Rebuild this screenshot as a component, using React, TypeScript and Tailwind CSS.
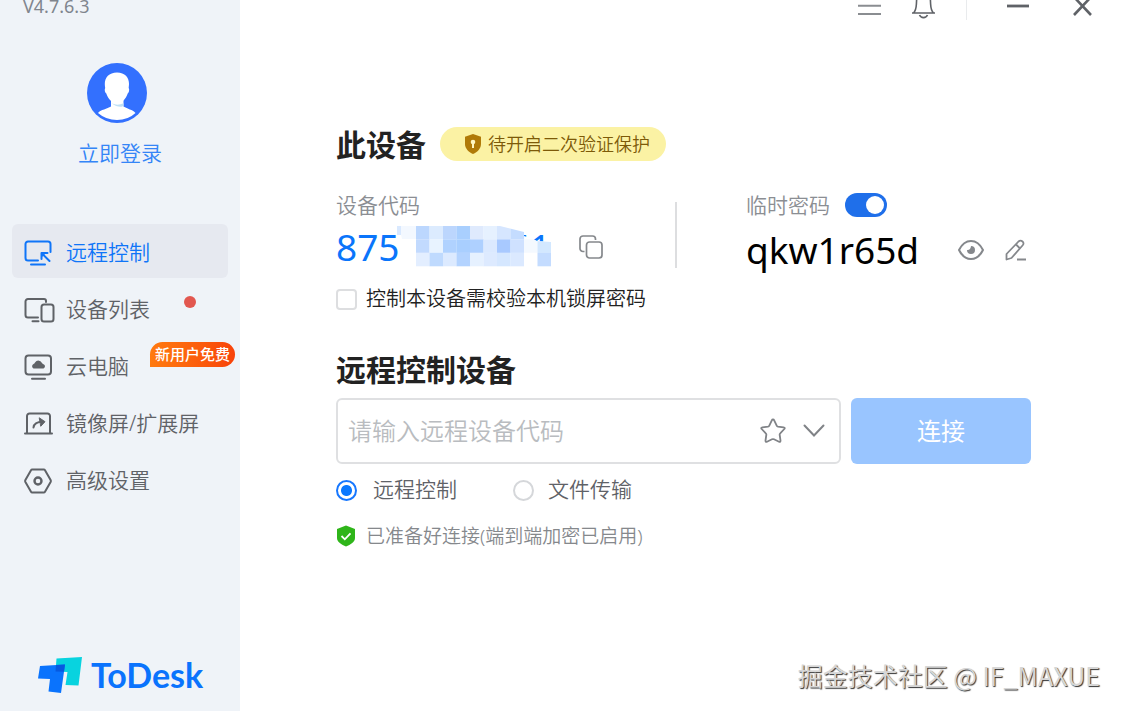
import React, { useState } from 'react';

type IconProps = { className?: string };

const RemoteIcon: React.FC<IconProps> = ({ className }) => (
  <svg className={className} width="28" height="26" viewBox="0 0 28 26" fill="none" stroke="currentColor" strokeWidth="2" strokeLinecap="round">
    <path d="M14 20.500H4a2.500 2.500 0 0 1-2.500-2.500V4A2.500 2.500 0 0 1 4 1.500h20A2.500 2.500 0 0 1 26.500 4v8" />
    <path d="M7 24.500h14" />
    <path d="M25.500 21L18.500 14" />
    <path d="M17.500 19v-6h6" strokeLinejoin="round" />
    <path d="M17 18v-5.500h5.500z" fill="currentColor" stroke="none" />
  </svg>
);

const DevicesIcon: React.FC<IconProps> = ({ className }) => (
  <svg className={className} width="31" height="26" viewBox="0 0 31 26" fill="none" stroke="currentColor" strokeWidth="2" strokeLinecap="round">
    <path d="M14 20.500H4A2.500 2.500 0 0 1 1.500 18V4.500A2.500 2.500 0 0 1 4 2h16a2 2 0 0 1 2 2v1" />
    <path d="M8.500 24.200h6" />
    <rect x="17.500" y="7.500" width="12" height="17" rx="2.500" />
  </svg>
);

const CloudPcIcon: React.FC<IconProps> = ({ className }) => (
  <svg className={className} width="28" height="26" viewBox="0 0 28 26" fill="none" stroke="currentColor" strokeWidth="2" strokeLinecap="round">
    <rect x="1.500" y="1.500" width="25.500" height="19" rx="3" />
    <path d="M8 24.700h13" />
    <path d="M9.500 14.500a2.500 2.500 0 0 1 0-4.500q1-.2 1.500-1.500 1.300-2 3.300-2 2.500 0 3.700 2.500.5 1 1.500 1.200a2.300 2.300 0 0 1 0 4.300z" fill="currentColor" stroke="none" />
  </svg>
);

const MirrorIcon: React.FC<IconProps> = ({ className }) => (
  <svg className={className} width="29" height="24" viewBox="0 0 29 24" fill="none" stroke="currentColor" strokeWidth="2" strokeLinecap="round">
    <path d="M3 21V4a2.500 2.500 0 0 1 2.500-2.500h18A2.500 2.500 0 0 1 26 4v17" />
    <path d="M1 21.500h27" />
    <path d="M9.500 15.500c.5-4 4-5.800 9-5.800" />
    <path d="M15.500 6l5.500 3.700-4 4.300z" fill="currentColor" strokeWidth="1" strokeLinejoin="round" />
  </svg>
);

const SettingsIcon: React.FC<IconProps> = ({ className }) => (
  <svg className={className} width="28" height="26" viewBox="0 0 28 26" fill="none" stroke="currentColor" strokeWidth="2" strokeLinejoin="round">
    <path d="M8.200 1.500h11.600q.8 0 1.200.7l5.600 9.800q.5 1 0 2L21 23.800q-.4.700-1.200.7H8.200q-.8 0-1.200-.7L1.400 14q-.5-1 0-2L7 2.200q.4-.7 1.200-.7z" />
    <circle cx="14" cy="13" r="3.500" strokeWidth="2.400" />
  </svg>
);

const Avatar: React.FC = () => (
  <svg width="60" height="60" viewBox="0 0 60 60" aria-hidden="true">
    <circle cx="30" cy="30" r="30" fill="#3370fe" />
    <path d="M24 36h12.500v7.500c4 2.500 9 3 12 6.500Q41 57 30 57t-19-7c3-3.500 9-4 13-6.500z" fill="#fff" />
    <path d="M24.500 40c4 2.300 8 2 12 .3v2c-1 2.500-7 2-12-2.300z" fill="#bfe0f5" />
    <path d="M30 9.500c8 0 12 5 12 11.500 0 1.500-.3 3-.3 4 1 1.500.3 4.500-1 5.500C39 36 34 41 30 41s-9-5-10.700-10.500c-1.500-1-2-4-1.100-5.500-.2-1-.4-2.500-.4-4C17.800 14.500 22 9.500 30 9.500z" fill="#fff" />
  </svg>
);

// pixelated patch over the middle of the device code, one entry per cell
const MOSAIC = [
  ['#bcd7fe', '#dcebfe', '#bcd6fd', '#a9cffe', '#dfeafd', '#e6f1ff', '#d6e6ff', '#c4dcff'],
  ['#c2dafe', '#e8f3ff', '#b0d2ff', '#a9cfff', '#aed0ff', '#dbe9ff', '#a8c9ff', '#cfe1ff', '#f4f9ff', '#d3e8ff'],
  ['#e3eeff', '#bfdafe', '#dceaff', '#b3d3ff', '#e6f1ff', '#ddeaff', '#d5e7ff', '#dbe9ff', '#ffffff', '#c4dcff'],
];

const Mosaic: React.FC = () => (
  <svg className="absolute left-[60px] top-0" width="160" height="60" viewBox="0 0 160 60" aria-hidden="true">
    <defs>
      <clipPath id="patch">
        <path d="M0 0h100l4 7 24 6v4l6 2 7 3 14 1v25H9V20H0z" />
      </clipPath>
    </defs>
    <g clipPath="url(#patch)">
      <path d="M9 7h147v42H9z" fill="#fff" />
      <path d="M3 7h17v13H6z" fill="#f3f8ff" />
      <rect x="1" y="7" width="4" height="9" fill="#d9e9ff" />
      {MOSAIC.map((row, r) =>
        row.map((color, c) => (
          <rect key={`${r}-${c}`} x={20 + c * 13.5} y={7 + r * 13.4} width="13.6" height="13.5" fill={color} />
        ))
      )}
    </g>
  </svg>
);

const NAV = [
  { label: '远程控制', icon: RemoteIcon },
  { label: '设备列表', icon: DevicesIcon, dot: true },
  { label: '云电脑', icon: CloudPcIcon, tag: '新用户免费' },
  { label: '镜像屏/扩展屏', icon: MirrorIcon },
  { label: '高级设置', icon: SettingsIcon },
];

const Sidebar: React.FC = () => {
  const [active, setActive] = useState(0);

  return (
    <aside className="flex w-60 shrink-0 flex-col bg-[#eff3f8]">
      <div className="-mt-1.5 pl-[23px] text-lg leading-6 font-normal text-[#80858e]">V4.7.6.3</div>

      <div className="mt-[45px] flex flex-col items-center">
        <div className="pr-1.5">
          <Avatar />
        </div>
        <a href="#login" className="mt-4 text-[21px] leading-7 text-[#3485f7]">
          立即登录
        </a>
      </div>

      <nav className="mt-[57px] flex flex-col gap-[3px] px-3">
        {NAV.map((item, idx) => {
          const Icon = item.icon;
          return (
            <button
              key={item.label}
              type="button"
              onClick={() => setActive(idx)}
              className={`relative flex h-[54px] items-center rounded-md pt-[3px] pl-3 text-left text-[21px] ${idx === active ? 'bg-[#e6e9f0] text-[#0f75f8]' : 'text-[#5f6267]'}`}
            >
              <span className="w-[42px] shrink-0">
                <Icon />
              </span>
              {item.label}
              {item.dot && <span className="absolute right-8 top-[15px] size-3 rounded-full bg-[#e2574f]" />}
              {item.tag && (
                <span className="absolute -right-[7px] top-1 rounded-t-full rounded-br-full rounded-bl-sm bg-linear-to-r from-[#ff7a0f] to-[#f8420a] px-[5px] text-[15px] leading-[25px] font-medium text-white">
                  {item.tag}
                </span>
              )}
            </button>
          );
        })}
      </nav>

      <div className="mt-auto flex items-center gap-2 pb-4 pl-[38px]">
        <svg width="45" height="36" viewBox="0 0 45 36" aria-hidden="true">
          <path d="M18.500 1.500L44 0l-3.500 28.500L27.500 28l2-13-12-.5z" fill="#08d3df" />
          <path d="M2 9l25-1.500L23 36l-12.500-1.500L12 22 0 21.500z" fill="#0a73fd" />
          <path d="M18 8.100L27 7.500l-1 7.300-8.500-.3z" fill="#0659e0" />
        </svg>
        <span className="font-[Lato] text-[34px] leading-10 font-bold text-[#0a73fd]">ToDesk</span>
      </div>
    </aside>
  );
};

const WindowBar: React.FC = () => (
  <header className="flex h-5 items-start justify-end overflow-hidden pr-[30px] text-[#5f6267]">
    <button type="button" aria-label="菜单" className="mr-[30px]">
      <svg width="23" height="20" viewBox="0 0 23 20" stroke="#8a8d91" strokeWidth="2">
        <path d="M0 5.700h23M0 14h23" />
      </svg>
    </button>
    <button type="button" aria-label="通知" className="mr-[30px]">
      <svg width="25" height="20" viewBox="0 0 25 20" fill="none" stroke="currentColor" strokeWidth="1.600">
        <path d="M1 13h23M2.500 13c2-2 2.700-5 2.900-9l.3-6M22.500 13c-2-2-2.700-5-2.900-9l-.3-6" />
        <path d="M8.500 15c1.500 3.500 6.500 3.500 8 0" />
      </svg>
    </button>
    <span className="h-5 w-px bg-[#e9ebed]" />
    <button type="button" aria-label="最小化" className="ml-10">
      <svg width="22" height="20" viewBox="0 0 22 20" stroke="currentColor" strokeWidth="2.800">
        <path d="M0 6h22" />
      </svg>
    </button>
    <button type="button" aria-label="关闭" className="ml-11">
      <svg width="19" height="20" viewBox="0 0 19 20" stroke="currentColor" strokeWidth="2.600">
        <path d="M1-3l17 18M18-3L1 15" />
      </svg>
    </button>
  </header>
);

const App: React.FC = () => {
  const [tempPassword, setTempPassword] = useState(true);
  const [verifyLock, setVerifyLock] = useState(false);
  const [target, setTarget] = useState('');
  const [mode, setMode] = useState('control');

  const radioClass =
    "size-[21px] appearance-none rounded-full border-2 border-[#d5d7da] checked:border-[#1677ff] checked:bg-[radial-gradient(circle,#0a78ff_0_5px,#fff_6px)]";

  return (
    <div className="relative flex min-h-screen bg-white font-['Noto_Sans','Noto_Sans_CJK_SC',sans-serif] font-[350] text-[#222]">
      <Sidebar />

      <main className="min-w-0 flex-1">
        <WindowBar />

        <div className="pt-[106px] pr-[91px] pl-24">
          {/* This device */}
          <section>
            <div className="flex h-9 items-center gap-3.5">
              <h2 className="text-[30px] font-bold">此设备</h2>
              <button type="button" className="flex h-[34px] items-center gap-1.5 rounded-full bg-[#fbf2a4] pr-4 pl-6 text-lg text-[#7d5a08]">
                <svg width="18" height="20" viewBox="0 0 18 20" aria-hidden="true">
                  <path d="M9 0l8 2.800V10c0 4.500-3.500 8-8 10-4.500-2-8-5.500-8-10V2.800z" fill="#b07a08" />
                  <circle cx="9" cy="8" r="2.300" fill="#fff6c0" />
                  <path d="M8 9h2v5H8z" fill="#fff6c0" />
                </svg>
                待开启二次验证保护
              </button>
            </div>

            <div className="mt-[29px] flex items-start">
              <div className="flex-1">
                <div className="h-7 text-[21px] leading-7 text-[#8b8e93]">设备代码</div>
                <div className="flex h-14 items-center gap-7">
                  <div className="relative flex w-[215px] justify-between text-[37px] leading-[56px] font-normal text-[#0a75fb]">
                    <span>875</span>
                    <span>51</span>
                    <Mosaic />
                  </div>
                  <button type="button" aria-label="复制">
                    <svg width="24" height="24" viewBox="0 0 24 24" fill="none" stroke="#85888c" strokeWidth="1.700">
                      <path d="M5.500 16.500H4A3 3 0 0 1 1 13.500V4a3 3 0 0 1 3-3h9.500a3 3 0 0 1 3 3v1" />
                      <rect x="7.500" y="7" width="15.500" height="16" rx="3" />
                    </svg>
                  </button>
                </div>
              </div>
              <div className="mt-[11px] h-[66px] w-0.5 bg-[#dddee0]" />
              <div className="w-[354px] pl-[69px]">
                <label className="flex h-7 items-center gap-[15px] text-[21px] leading-7 text-[#8b8e93]">
                  临时密码
                  <input
                    type="checkbox"
                    role="switch"
                    checked={tempPassword}
                    onChange={(e) => setTempPassword(e.target.checked)}
                    className="h-6 w-[42px] appearance-none rounded-full bg-[#c5c8cc] p-[3px] before:block before:size-[18px] before:rounded-full before:bg-white checked:bg-[#1f6fea] checked:before:ml-[18px]"
                  />
                </label>
                <div className="flex h-[62px] items-center text-black">
                  <span className="flex-1 text-[37px] font-normal">qkw1r65d</span>
                  <button type="button" aria-label="显示密码">
                    <svg width="26" height="22" viewBox="0 0 26 22" fill="none" stroke="#85888c" strokeWidth="2">
                      <path d="M1 11c3-6 7-9 12-9s9 3 12 9c-3 6-7 9-12 9s-9-3-12-9z" strokeLinejoin="round" />
                      <path d="M13 7a4 4 0 1 1-4 4q3.500.5 4-4z" fill="#85888c" stroke="none" />
                    </svg>
                  </button>
                  <button type="button" aria-label="修改密码" className="mr-1 ml-[21px]">
                    <svg width="22" height="22" viewBox="0 0 22 22" fill="none" stroke="#85888c" strokeWidth="1.800" strokeLinejoin="round">
                      <path d="M1.500 20.500V15L13.500 2.500q2-1.800 4 0t0 4L6.500 19z" />
                      <path d="M11 5.500l4 4M12 20.500h9" />
                    </svg>
                  </button>
                </div>
              </div>
            </div>

            <label className="mt-[3px] flex h-[30px] items-center gap-[9px] text-xl">
              <input
                type="checkbox"
                checked={verifyLock}
                onChange={(e) => setVerifyLock(e.target.checked)}
                className="size-[21px] appearance-none rounded-sm border-2 border-[#dddee0] checked:bg-[#0a78ff]"
              />
              控制本设备需校验本机锁屏密码
            </label>
          </section>

          {/* Remote device */}
          <section className="mt-9">
            <h2 className="text-[30px] leading-10 font-bold">远程控制设备</h2>
            <div className="mt-2 flex gap-[10px]">
              <div className="flex h-[66px] min-w-0 flex-1 items-center rounded-md border-2 border-[#dfe0e2] pr-3.5 pl-[10px]">
                <input
                  type="text"
                  value={target}
                  onChange={(e) => setTarget(e.target.value)}
                  placeholder="请输入远程设备代码"
                  aria-label="远程设备代码"
                  className="min-w-0 flex-1 text-2xl outline-none placeholder:text-[#b9bcc0]"
                />
                <button type="button" aria-label="收藏">
                  <svg width="26" height="26" viewBox="0 0 26 26" fill="none" stroke="#808387" strokeWidth="1.800" strokeLinejoin="round">
                    <path d="M13 1.500q.8 0 1.200.9l2.500 5.300q.4.800 1.300 1l5.600.6q1.800.4.700 1.700l-4.100 4.300q-.7.700-.5 1.700l.8 5.600q.1 1.800-1.500 1.100L14 21.300q-1-.5-2 0l-5 2.400q-1.600.7-1.500-1.100l.8-5.600q.2-1-.5-1.700L1.700 11q-1.100-1.300.7-1.700L8 8.700q.9-.2 1.300-1l2.500-5.300q.4-.9 1.200-.9z" />
                  </svg>
                </button>
                <button type="button" aria-label="历史设备" className="ml-[17px]">
                  <svg width="22" height="14" viewBox="0 0 22 14" fill="none" stroke="#808387" strokeWidth="2" strokeLinecap="round">
                    <path d="M1.500 1.500L11 11.500l9.500-10" />
                  </svg>
                </button>
              </div>
              <button type="button" className="w-[180px] rounded-md bg-[#99c5ff] text-2xl font-normal text-white">
                连接
              </button>
            </div>

            <div className="mt-3 flex h-7 items-center gap-14 text-[21px] text-[#5f6267]">
              <label className="flex items-center gap-4">
                <input type="radio" name="mode" checked={mode === 'control'} onChange={() => setMode('control')} className={radioClass} />
                远程控制
              </label>
              <label className="flex items-center gap-3.5">
                <input type="radio" name="mode" checked={mode === 'file'} onChange={() => setMode('file')} className={radioClass} />
                文件传输
              </label>
            </div>

            <p className="mt-5 flex items-center gap-2.5 text-[19px] leading-6 text-[#85888c]">
              <svg width="20" height="22" viewBox="0 0 20 22" aria-hidden="true">
                <path d="M10 0.500l9 3.500v9c0 4-4.500 6.500-9 8.500-4.500-2-9-4.500-9-8.500V4z" fill="#2fb51a" />
                <path d="M5.500 11l3.300 3.300 5.700-6" fill="none" stroke="#fff" strokeWidth="1.800" />
              </svg>
              已准备好连接(端到端加密已启用)
            </p>
          </section>
        </div>
      </main>

      <div className="absolute right-[22px] bottom-[18px] font-['Noto_Sans_CJK_SC',sans-serif] text-[25px] leading-9 font-normal text-[#d6d6d6] [text-shadow:1px_1px_1px_#333]">
        掘金技术社区 @ IF_MAXUE
      </div>
    </div>
  );
};

export default App;
